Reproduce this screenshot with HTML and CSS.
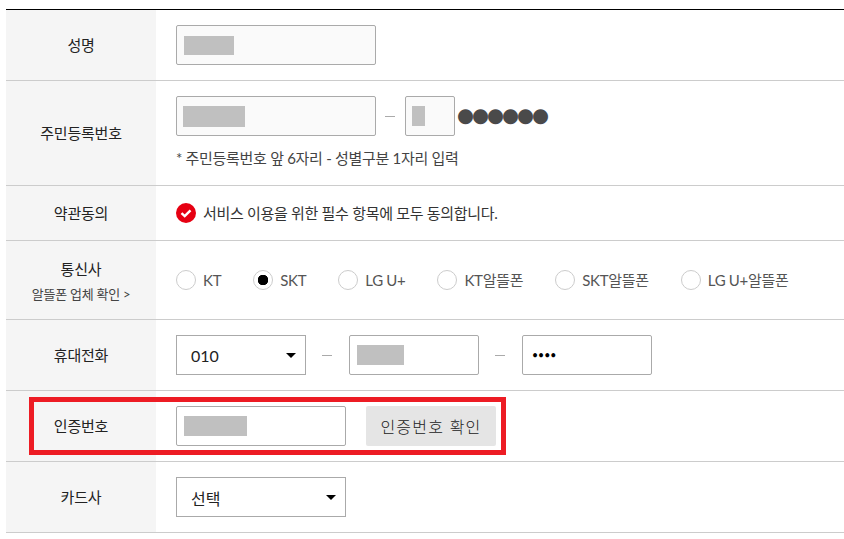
FILE: index.html
```html
<!DOCTYPE html>
<html lang="ko">
<head>
  <meta charset="UTF-8">
  <meta name="viewport" content="width=device-width, initial-scale=1.0">
  <title>본인인증</title>
  <link rel="stylesheet" href="styles.css">
</head>
<body>
  <div class="form-table">
    <!-- 성명 -->
    <div class="row">
      <div class="row-label">성명</div>
      <div class="row-body">
        <div class="field field-filled w-200"><span class="mask mask-name"></span></div>
      </div>
    </div>

    <!-- 주민등록번호 -->
    <div class="row">
      <div class="row-label">주민등록번호</div>
      <div class="row-body">
        <div class="line">
          <div class="field field-filled field-tight w-200"><span class="mask mask-jumin"></span></div>
          <span class="dash dash-jumin"></span>
          <div class="field field-filled field-back w-50"><span class="mask mask-back"></span></div>
          <span class="dots">●●●●●●</span>
        </div>
        <p class="note">* 주민등록번호 앞 6자리 - 성별구분 1자리 입력</p>
      </div>
    </div>

    <!-- 약관동의 -->
    <div class="row">
      <div class="row-label">약관동의</div>
      <div class="row-body row-agree">
        <svg class="check-icon" width="20" height="20" viewBox="0 0 20 20">
          <circle cx="10" cy="10" r="10" fill="#e60012"/>
          <path d="M5.5 10.2l3.2 3 5.8-5.8" fill="none" stroke="#fff" stroke-width="2.4"/>
        </svg>
        <span class="agree-text">서비스 이용을 위한 필수 항목에 모두 동의합니다.</span>
      </div>
    </div>

    <!-- 통신사 -->
    <div class="row">
      <div class="row-label row-label-carrier">
        <span>통신사</span>
        <a class="sub-link" href="#">알뜰폰 업체 확인 &gt;</a>
      </div>
      <div class="row-body radios">
        <label class="radio-item"><input class="radio" type="radio" name="telecom">KT</label>
        <label class="radio-item"><input class="radio" type="radio" name="telecom" checked>SKT</label>
        <label class="radio-item"><input class="radio" type="radio" name="telecom">LG U+</label>
        <label class="radio-item"><input class="radio" type="radio" name="telecom">KT알뜰폰</label>
        <label class="radio-item"><input class="radio" type="radio" name="telecom">SKT알뜰폰</label>
        <label class="radio-item"><input class="radio" type="radio" name="telecom">LG U+알뜰폰</label>
      </div>
    </div>

    <!-- 휴대전화 -->
    <div class="row">
      <div class="row-label">휴대전화</div>
      <div class="row-body line">
        <div class="select w-130"><span>010</span><i class="caret"></i></div>
        <span class="dash"></span>
        <div class="field w-130"><span class="mask mask-phone"></span></div>
        <span class="dash"></span>
        <div class="field w-130"><span class="secret">••••</span></div>
      </div>
    </div>

    <!-- 인증번호 -->
    <div class="row row-marked">
      <div class="row-label">인증번호</div>
      <div class="row-body line">
        <div class="field w-170"><span class="mask mask-auth"></span></div>
        <button class="confirm-button" type="button">인증번호 확인</button>
      </div>
      <div class="red-box"></div>
    </div>

    <!-- 카드사 -->
    <div class="row">
      <div class="row-label">카드사</div>
      <div class="row-body">
        <div class="select w-170"><span>선택</span><i class="caret"></i></div>
      </div>
    </div>
  </div>
</body>
</html>
```

FILE: styles.css
```css
* {
  margin: 0;
  padding: 0;
  box-sizing: border-box;
}

body {
  font-family: 'Lato', 'Noto Sans CJK KR', sans-serif;
  font-size: 15px;
  color: #222;
  background: #fff;
  padding: 9px 0 0 6px;
}

/* Table */
.form-table {
  border-top: 1px solid #000;
}

.row {
  position: relative;
  display: flex;
  border-bottom: 1px solid #ccc;
}

.row-label {
  flex: 0 0 150px;
  display: flex;
  align-items: center;
  justify-content: center;
  padding-bottom: 2px;
  background: #f5f5f5;
  letter-spacing: -0.2px;
}

.row-label-carrier {
  flex-direction: column;
  gap: 5px;
  padding: 2px 0 0;
}

.sub-link {
  font-size: 13px;
  line-height: 20px;
  color: #444;
  text-decoration: none;
  letter-spacing: -0.25px;
}

.row-body {
  flex: 1;
  padding: 15px 20px;
}

.line {
  display: flex;
  align-items: center;
}

/* Inputs */
.field {
  height: 40px;
  display: flex;
  align-items: center;
  padding-left: 7px;
  background: #fff;
  border: 1px solid #aaa;
  border-radius: 2px;
}

.field-filled {
  background: #fafafa;
}

.field-tight {
  padding-left: 6px;
}

.field-back {
  padding-left: 6px;
}

.w-50 { width: 50px; }
.w-130 { width: 130px; }
.w-170 { width: 170px; }
.w-200 { width: 200px; }

/* Blurred values */
.mask {
  display: block;
  background: #c0c0c0;
}

.mask-name { width: 50px; height: 19px; }
.mask-jumin { width: 62px; height: 21px; }
.mask-back { width: 13px; height: 20px; }
.mask-phone { width: 47px; height: 20px; }
.mask-auth { width: 63px; height: 20px; }

.dash {
  width: 10px;
  height: 1px;
  margin: 0 17px 0 16px;
  background: #aaa;
}

.dash-jumin {
  margin: 0 10px 0 9px;
}

.dots {
  margin-left: 2px;
  font-family: 'DejaVu Sans', sans-serif;
  font-size: 19.5px;
  line-height: 24px;
  letter-spacing: -2px;
  color: #4a4a4a;
}

.secret {
  margin-left: 2px;
  font-size: 10.5px;
  color: #000;
}

.note {
  margin-top: 11px;
  font-size: 15px;
  line-height: 23px;
  color: #444;
  letter-spacing: -0.3px;
}

/* Agreement */
.row-agree {
  display: flex;
  align-items: center;
  gap: 7px;
}

.agree-text {
  font-size: 15px;
  line-height: 24px;
  color: #333;
  letter-spacing: -0.3px;
}

/* Radios */
.radios {
  display: flex;
  align-items: center;
  gap: 32px;
  padding-top: 29px;
  padding-bottom: 29px;
}

.radio-item {
  display: flex;
  align-items: center;
  gap: 7px;
  line-height: 20px;
  color: #555;
  letter-spacing: -0.3px;
}

.radio {
  appearance: none;
  width: 20px;
  height: 20px;
  border: 1px solid #ccc;
  border-radius: 50%;
  background: #fff;
}

.radio:checked {
  background: radial-gradient(circle, #000 0, #000 5px, #fff 5.5px);
}

/* Selects */
.select {
  height: 40px;
  display: flex;
  align-items: center;
  justify-content: space-between;
  padding: 1px 9px 0 14px;
  border: 1px solid #aaa;
  background: #fff;
  font-size: 16px;
}

.caret {
  width: 0;
  height: 0;
  margin-top: -1px;
  border-left: 5px solid transparent;
  border-right: 5px solid transparent;
  border-top: 5px solid #000;
}

/* Confirm button */
.confirm-button {
  width: 130px;
  height: 40px;
  margin-left: 20px;
  border: none;
  border-radius: 2px;
  background: #e5e5e5;
  font-family: inherit;
  font-size: 16px;
  font-weight: 300;
  letter-spacing: 1.2px;
  color: #222;
}

/* Red marker over the row */
.red-box {
  position: absolute;
  left: 23px;
  top: 6px;
  width: 477px;
  height: 58px;
  border: 5px solid #ed1c24;
}
```
